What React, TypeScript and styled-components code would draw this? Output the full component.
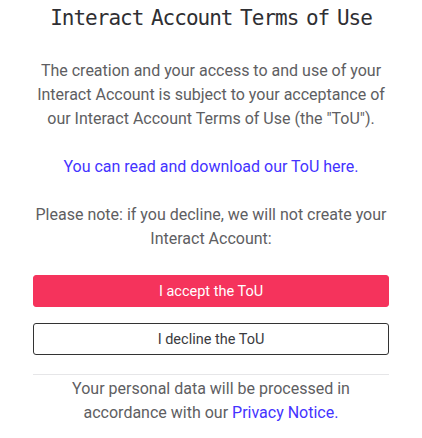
import React from "react";
import styled, { createGlobalStyle } from "styled-components";

const GlobalStyle = createGlobalStyle`
  body {
    margin: 0;
    background: #ffffff;
    font-family: Roboto, "Liberation Sans", sans-serif;
  }
`;

const Page = styled.div`
  width: 422px;
  box-sizing: border-box;
  padding: 0 33px;
  display: flex;
  flex-direction: column;
  text-align: center;
`;

const Title = styled.h1`
  margin: 0;
  font-family: "DejaVu Sans Mono", monospace;
  font-weight: 400;
  font-size: 21px;
  letter-spacing: -1px;
  word-spacing: -4px;
  line-height: 36px;
  color: #2f2f33;
`;

const Text = styled.p<{ $gap?: number }>`
  margin: ${(p) => p.$gap ?? 24}px 0 0;
  font-size: 16px;
  line-height: 24px;
  color: #5e5e62;
`;

const Link = styled.a`
  color: #4433ff;
  text-decoration: none;
  cursor: pointer;
`;

const Actions = styled.div`
  margin-top: 24px;
  display: flex;
  flex-direction: column;
  gap: 16px;
`;

const Button = styled.button<{ $primary?: boolean }>`
  height: 32px;
  width: 100%;
  box-sizing: border-box;
  border-radius: 3px;
  font-family: Roboto, "Liberation Sans", sans-serif;
  font-size: 14.5px;
  cursor: pointer;
  border: 1px solid ${(p) => (p.$primary ? "#f5335c" : "#333333")};
  background: ${(p) => (p.$primary ? "#f5335c" : "#ffffff")};
  color: ${(p) => (p.$primary ? "#ffffff" : "#3a3a3e")};
`;

const Divider = styled.hr`
  margin: 19px 0 0;
  border: none;
  border-top: 1px solid #e6e6e8;
`;

export default function App() {
  return (
    <Page>
      <GlobalStyle />
      <Title>Interact Account Terms of Use</Title>
      <Text $gap={23}>
        The creation and your access to and use of your Interact Account is
        subject to your acceptance of our Interact Account Terms of Use (the
        "ToU").
      </Text>
      <Text>
        <Link>You can read and download our ToU here.</Link>
      </Text>
      <Text>
        Please note: if you decline, we will not create your Interact Account:
      </Text>
      <Actions>
        <Button $primary>I accept the ToU</Button>
        <Button>I decline the ToU</Button>
      </Actions>
      <Divider />
      <Text $gap={2}>
        Your personal data will be processed in accordance with our{" "}
        <Link>Privacy Notice.</Link>
      </Text>
    </Page>
  );
}
